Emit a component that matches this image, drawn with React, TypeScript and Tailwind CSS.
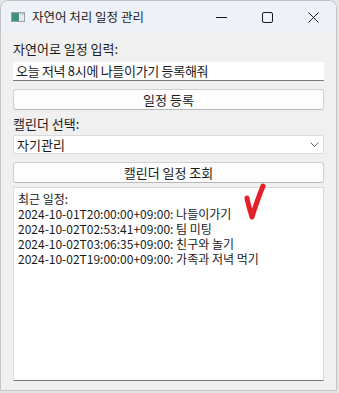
const FONT = '[font-family:"Noto_Sans_CJK_KR","Noto_Sans",sans-serif]'

const events = [
  '2024-10-01T20:00:00+09:00: 나들이가기',
  '2024-10-02T02:53:41+09:00: 팀 미팅',
  '2024-10-02T03:06:35+09:00: 친구와 놀기',
  '2024-10-02T19:00:00+09:00: 가족과 저녁 먹기',
]

function TitleBar() {
  return (
    <div className="flex h-[32px] items-center bg-[#eef2f8] pl-[10px]">
      <svg width="14" height="10" viewBox="0 0 14 10" className="mr-[7px]">
        <rect x="0.5" y="0.5" width="13" height="9" fill="#e6e9ec" stroke="#9aa3ab" />
        <rect x="1" y="1" width="7" height="8" fill="#3f8f7a" />
        <rect x="9" y="1" width="4" height="2" fill="#c9ced3" />
      </svg>
      <span className="text-[12.5px] text-[#1a1a1a]">자연어 처리 일정 관리</span>
      <div className="ml-auto flex h-full items-center">
        <div className="flex h-full w-[46px] items-center justify-center">
          <svg width="11" height="11" viewBox="0 0 11 11">
            <line x1="0" y1="5.5" x2="11" y2="5.5" stroke="#1a1a1a" strokeWidth="1" />
          </svg>
        </div>
        <div className="flex h-full w-[46px] items-center justify-center">
          <svg width="11" height="11" viewBox="0 0 11 11">
            <rect x="0.5" y="0.5" width="10" height="10" rx="1.5" fill="none" stroke="#1a1a1a" />
          </svg>
        </div>
        <div className="flex h-full w-[46px] items-center justify-center">
          <svg width="11" height="11" viewBox="0 0 11 11">
            <path d="M0.5 0.5 L10.5 10.5 M10.5 0.5 L0.5 10.5" stroke="#1a1a1a" strokeWidth="1" />
          </svg>
        </div>
      </div>
    </div>
  )
}

function PushButton({ label }: { label: string }) {
  return (
    <button className="block h-[21px] w-full rounded-[3px] border border-[#d0d0d0] border-b-[#b8b8b8] bg-[#fdfdfd] text-[13px] leading-none text-[#1a1a1a]">
      {label}
    </button>
  )
}

export default function App() {
  return (
    <div className={`h-[393px] w-[339px] bg-[#e4e4e4] ${FONT}`}>
      <div className="relative flex h-[391px] w-[337px] flex-col overflow-hidden rounded-t-[8px] border border-[#c4c4c4] bg-[#f0f0f0]">
        <TitleBar />
        <div className="flex flex-1 flex-col px-[12px] pb-[9px]">
          <div className="mt-[6px] h-[20px] text-[13px] leading-[20px] text-[#1a1a1a]">자연어로 일정 입력:</div>
          <div className="mt-[3px] flex h-[19px] items-center border-b border-b-[#7a7a7a] bg-white px-[3px] text-[13px] tracking-[-0.3px] text-[#1a1a1a]">
            오늘 저녁 8시에 나들이가기 등록해줘
          </div>
          <div className="mt-[8px]">
            <PushButton label="일정 등록" />
          </div>
          <div className="mt-[4px] h-[20px] text-[13px] leading-[20px] text-[#1a1a1a]">캘린더 선택:</div>
          <div className="mt-[1px] flex h-[19px] items-center rounded-[2px] border border-[#dadada] bg-white pl-[3px] pr-[4px] text-[13px] text-[#1a1a1a]">
            <span>자기관리</span>
            <svg width="9" height="5" viewBox="0 0 9 5" className="ml-auto">
              <path d="M0.5 0.5 L4.5 4.5 L8.5 0.5" fill="none" stroke="#666" strokeWidth="1" />
            </svg>
          </div>
          <div className="mt-[8px]">
            <PushButton label="캘린더 일정 조회" />
          </div>
          <div className="relative mt-[4px] flex-1 border border-[#dcdcdc] border-b-[#7a7a7a] bg-white px-[4px] pt-[3px] text-[12px] leading-[15px] text-[#1a1a1a]">
            <div>최근 일정:</div>
            {events.map((e) => (
              <div key={e}>{e}</div>
            ))}
          </div>
        </div>
        <svg width="30" height="38" viewBox="0 0 30 38" className="absolute left-[236px] top-[181px]">
          <path
            d="M10 16 C11 22 13 28 15 35 C18 25 22 14 26 4"
            fill="none"
            stroke="#e5202b"
            strokeWidth="5"
            strokeLinecap="round"
            strokeLinejoin="round"
          />
        </svg>
      </div>
    </div>
  )
}
